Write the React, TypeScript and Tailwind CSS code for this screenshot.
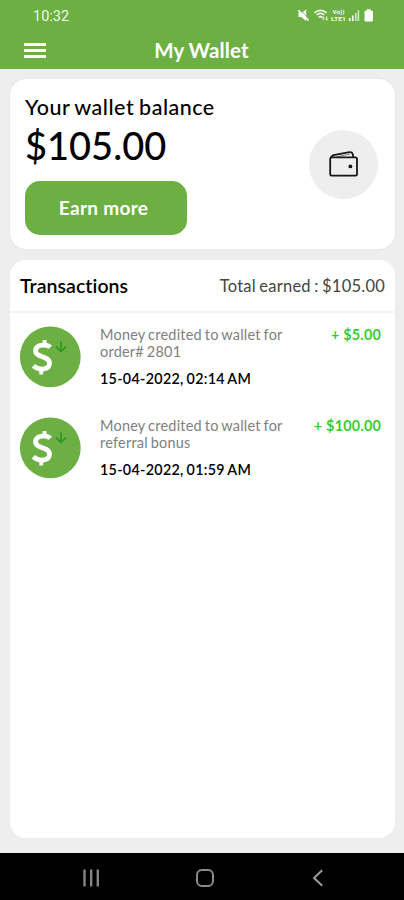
import React from "react";

const transactions = [
  { id: 1, lines: ["Money credited to wallet for", "order# 2801"], date: "15-04-2022, 02:14 AM", amount: "+ $5.00" },
  { id: 2, lines: ["Money credited to wallet for", "referral bonus"], date: "15-04-2022, 01:59 AM", amount: "+ $100.00" },
];

function StatusIcons() {
  return (
    <svg width="78" height="16" viewBox="297 8 78 16" fill="none" className="block">
      <path d="M298.5 13h2.8l4.9-3.6v11.6l-4.9-4h-2.8z" fill="#fff" />
      <path d="M299.9 9.7l10 10" stroke="#6cb043" strokeWidth="0.8" />
      <path d="M298.3 10.4l10.2 10" stroke="#fff" strokeWidth="1.8" />
      <path d="M314.3 12.8q6.3-5 12.4 0M316.5 15q4-3.2 7.8 0M318.8 17.3q1.7-1.3 3.4 0" stroke="#f2f9ee" strokeWidth="1.6" />
      <path d="M323.3 20.3v-3M322.2 18.2l1.1-1.4 1.1 1.4M326.7 16.3v3.5M325.6 18.8l1.1 1.4 1.1-1.4" stroke="#eef7e9" strokeWidth="1" />
      <text x="332.5" y="14.4" fontSize="5" fontWeight="700" fill="#f2faee" fontFamily="Roboto, sans-serif" textLength="12" lengthAdjust="spacingAndGlyphs">Vo))</text>
      <text x="331" y="20.8" fontSize="5" fontWeight="700" fill="#f2faee" fontFamily="Roboto, sans-serif" textLength="15" lengthAdjust="spacingAndGlyphs">LTE1</text>
      <path d="M349.7 21v-3M352.8 21v-5.4" stroke="#f4faf0" strokeWidth="1.7" />
      <path d="M355.8 21v-8M358.4 21V10.3" stroke="#d3e9c6" strokeWidth="1.6" />
      <path d="M366.7 9.3h4v1.5h1.4q.8 0 .8.8v9q0 .8-.8.8h-6.8q-.8 0-.8-.8v-9q0-.8.8-.8h1.4z" fill="#fff" />
    </svg>
  );
}

function WalletIcon() {
  return (
    <svg width="30" height="28" viewBox="0 0 30 28" fill="none" stroke="#171717" strokeWidth="1.8" strokeLinejoin="round" className="block">
      <rect x="1.2" y="7.4" width="26.8" height="18.2" rx="1.6" />
      <path d="M1.8 7L4.6 5.1L20.4 2.1q2.6-.4 3.2 1.6l.7 3.4" />
      <path d="M8.1 6.6L21.1 4.1" strokeWidth="0.5" />
      <circle cx="21.4" cy="16.4" r="1.9" fill="#171717" stroke="none" />
    </svg>
  );
}

function DollarBadge() {
  return (
    <svg width="62" height="62" viewBox="0 0 62 62" fill="none" className="block shrink-0">
      <circle cx="31.3" cy="30.8" r="30.4" fill="#6cb043" />
      <path d="M31.2 21.4C28.5 18.2 16.9 17.6 16.6 24.8c-.2 6.8 13.9 4.9 13.9 12.3 0 7.6-11.3 7.3-16.1 2.6" stroke="#fff" strokeWidth="4.8" />
      <path d="M25.6 14v6.5M22.2 41.5v7" stroke="#fff" strokeWidth="3.8" />
      <path d="M42 15.2v10.4M37 20.6l5 5 5-5" stroke="#2f9420" strokeWidth="1.6" />
    </svg>
  );
}

export default function App() {
  return (
    <div className="flex h-[900px] w-[404px] flex-col overflow-hidden bg-[#eeeeee] font-[Lato,sans-serif] text-black">
      <header className="flex h-[69px] shrink-0 flex-col bg-[#6cb043] text-white">
        <div className="flex h-8 items-center justify-between pr-[29px] pl-[33px]">
          <span className="pt-px font-[Roboto,sans-serif] text-[14.5px] leading-8 text-[#eef7e9]">10:32</span>
          <StatusIcons />
        </div>
        <div className="grid h-[37px] grid-cols-[100px_1fr_100px] items-center">
          <div className="flex flex-col gap-[3px] pl-6">
            <i className="h-[3px] w-[22px] bg-white" />
            <i className="h-[3px] w-[22px] bg-white" />
            <i className="h-[3px] w-[22px] bg-white" />
          </div>
          <h1 className="pr-px text-center text-[20.5px] leading-[37px] font-bold tracking-[0.15px] [word-spacing:-0.5px]">My Wallet</h1>
        </div>
      </header>

      <main className="flex grow flex-col gap-[11px] pt-[10px] pr-[9px] pb-[15px] pl-[10px]">
        <section className="flex h-[170px] shrink-0 items-center justify-between rounded-[16px] bg-white pr-[17px] pl-[15px] shadow-[0_0_2px_#dddddd]">
          <div className="h-full pt-[15px]">
            <h2 className="text-[21.5px] leading-[26px] font-medium tracking-[0.49px] [word-spacing:-1px]">Your wallet balance</h2>
            <p className="mt-[2px] text-[38px] leading-[46px] font-medium">$105.00</p>
            <button className="mt-[13px] flex h-[54px] w-[162px] items-center justify-center rounded-[15px] bg-[#6cb043] pr-[5px] text-[19px] font-bold tracking-[0.3px] text-white">Earn more</button>
          </div>
          <div className="flex h-[69px] w-[69px] items-center justify-center rounded-full bg-[#eeeeee]">
            <WalletIcon />
          </div>
        </section>

        <section className="flex grow flex-col rounded-[16px] bg-white">
          <div className="flex h-[53px] shrink-0 items-center justify-between border-b-2 border-[#f4f4f4] px-[10px]">
            <h2 className="text-[19.5px] font-semibold tracking-[0.05px]">Transactions</h2>
            <p className="pt-px text-[16.5px] font-normal tracking-[0.23px] text-[#444444] [word-spacing:-1px]">Total earned : $105.00</p>
          </div>
          <div className="flex flex-col gap-[29px] pt-[13px] pr-[14px] pl-[9px]">
            {transactions.map((t) => (
              <article key={t.id} className="flex h-[62px] items-start">
                <DollarBadge />
                <div className="ml-[19px] grow">
                  <p className="text-[14.5px] leading-[17px] tracking-[0.21px] text-[#808080] [word-spacing:-1px]">
                    {t.lines[0]}
                    <br />
                    {t.lines[1]}
                  </p>
                  <p className="mt-[10px] text-[14.3px] leading-[18px] font-semibold tracking-[0.31px] [word-spacing:-1px]">{t.date}</p>
                </div>
                <p className="text-[14.4px] leading-[17px] font-bold tracking-[0.2px] text-[#36cd31]">{t.amount}</p>
              </article>
            ))}
          </div>
        </section>
      </main>

      <nav className="grid h-[47px] shrink-0 grid-cols-[182px_45px_1fr] items-center bg-black text-[#8b8b8b]">
        <svg width="18" height="18" viewBox="0 0 18 18" stroke="#858585" strokeWidth="2.4" className="mt-[3px] ml-[82px]">
          <path d="M2.5 0.5v17M9.2 0.5v17M15.8 0.5v17" />
        </svg>
        <div className="flex justify-center pt-[2px]">
          <i className="h-[18px] w-[18px] rounded-[6px] border-2 border-[#8b8b8b]" />
        </div>
        <svg width="12" height="18" viewBox="0 0 12 18" fill="none" stroke="#a0a0a0" strokeWidth="1.9" className="mt-[2px] ml-[85px]">
          <path d="M10.2 1.2L2 9l8.2 7.8" />
        </svg>
      </nav>
    </div>
  );
}
